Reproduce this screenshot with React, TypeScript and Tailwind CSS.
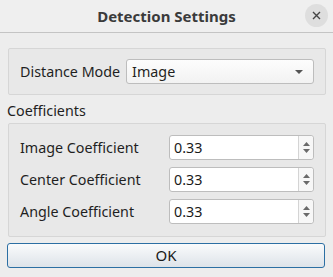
import React from "react";

function Spin({ value }: { value: string }) {
  return (
    <div className="flex h-[25px] w-[145px] rounded-[3px] border border-[#bdbdbd] bg-white">
      <div className="flex flex-1 items-center pl-[4px] text-[14.3px] text-[#1a1a1a]">{value}</div>
      <div className="flex w-[15px] flex-col items-center justify-center gap-[3px] border-l border-[#d4d4d4] bg-[#f7f7f7] rounded-r-[3px]">
        <svg width="7" height="4" viewBox="0 0 7 4"><path d="M0 4 L3.5 0 L7 4 Z" fill="#6a6a6a" /></svg>
        <svg width="7" height="4" viewBox="0 0 7 4"><path d="M0 0 L3.5 4 L7 0 Z" fill="#6a6a6a" /></svg>
      </div>
    </div>
  );
}

export default function App() {
  return (
    <div
      className="h-[277px] w-[333px] overflow-hidden bg-[#ededed] text-[#1f1f1f]"
      style={{ fontFamily: '"Noto Sans", "Open Sans", sans-serif' }}
    >
      {/* Title bar */}
      <div className="relative flex h-[33px] items-center justify-center border-b border-[#c4c4c4] bg-[#efefef]">
        <span className="text-[15px] font-bold text-[#3b3b3b]">Detection Settings</span>
        <div className="absolute right-[5px] top-[4px] flex h-[23px] w-[23px] items-center justify-center rounded-full bg-[#dedede]">
          <svg width="9" height="9" viewBox="0 0 9 9">
            <path d="M1 1 L8 8 M8 1 L1 8" stroke="#444" strokeWidth="1.4" />
          </svg>
        </div>
      </div>

      <div className="px-[7px] pt-[15px]">
        {/* Distance mode group */}
        <div className="ml-[1px] flex h-[47px] items-center rounded-[2px] border border-[#d6d6d6] bg-[#e8e8e8] pl-[11px] pr-[11px]">
          <span className="text-[14.3px]">Distance Mode</span>
          <div className="ml-[6px] flex h-[25px] flex-1 items-center justify-between rounded-[3px] border border-[#bdbdbd] bg-gradient-to-b from-[#fdfdfd] to-[#f2f2f2] pl-[5px] pr-[10px]">
            <span className="text-[14.3px]">Image</span>
            <svg width="8" height="4" viewBox="0 0 8 4"><path d="M0 0 L4 4 L8 0 Z" fill="#555" /></svg>
          </div>
        </div>

        <div className="mt-[6px] text-[14.3px] leading-[20px]">Coefficients</div>

        {/* Coefficients group */}
        <div className="ml-[1px] mt-[2px] flex flex-col gap-[7px] rounded-[2px] border border-[#d6d6d6] bg-[#e8e8e8] pb-[12px] pl-[11px] pr-[11px] pt-[11px]">
          {["Image Coefficient", "Center Coefficient", "Angle Coefficient"].map((l) => (
            <div key={l} className="flex items-center justify-between">
              <span className="text-[14.3px]">{l}</span>
              <Spin value="0.33" />
            </div>
          ))}
        </div>

        <button className="mt-[6px] flex h-[25px] w-[318px] items-center justify-center rounded-[3px] border border-[#2c6fa3] bg-gradient-to-b from-[#fafbfc] to-[#dde3e9] text-[15px] text-[#1a1a1a]">
          OK
        </button>
      </div>
    </div>
  );
}
